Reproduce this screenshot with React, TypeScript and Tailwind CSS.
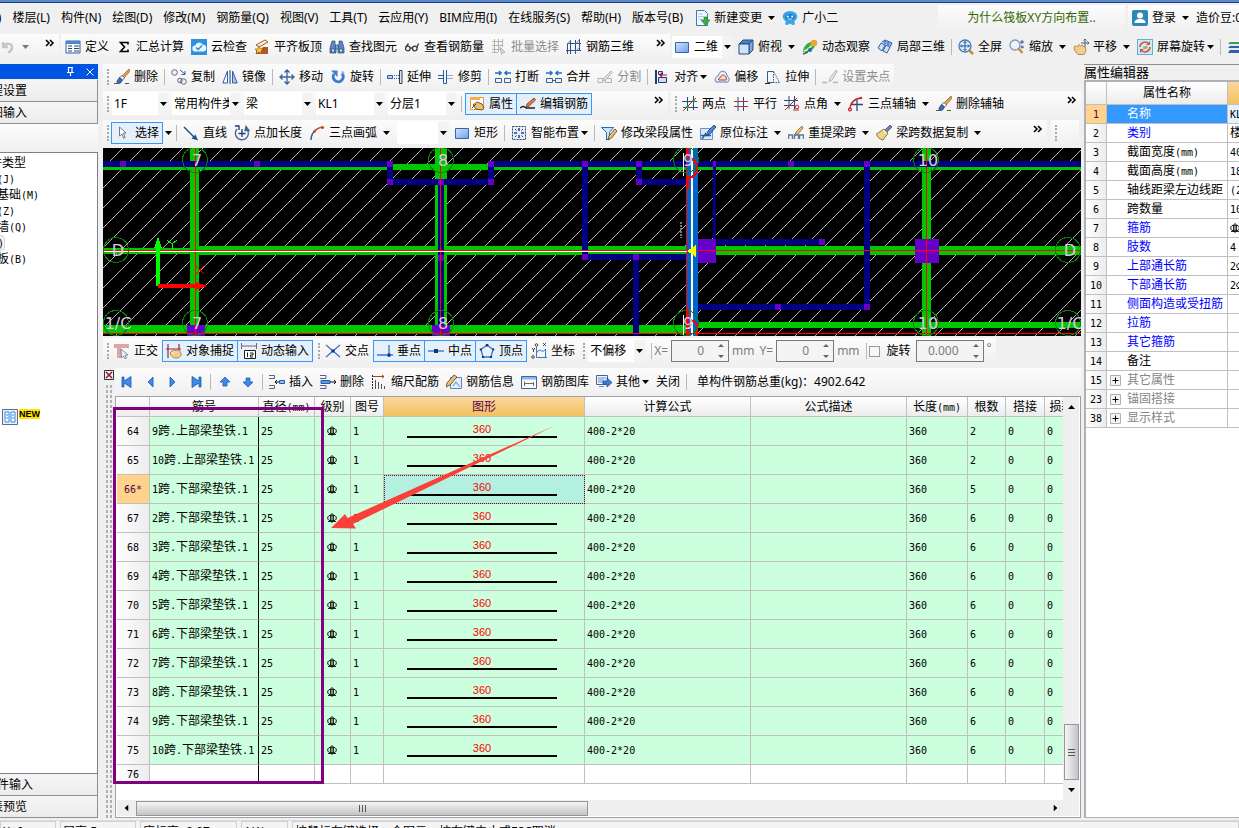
import React from "react";
import clsx from "clsx";

const icons: Record<string, React.ReactNode> = {
  undo: (
    <g fill="none" stroke="#c3c7cc" strokeWidth="2.4">
      <path d="M3 3v5h5M3.500 7.5C6 3.5 12.500 4 12 9c-.3 2-1.500 3.500-4 4.500" />
    </g>
  ),
  define: (
    <g>
      <path d="M1 2h14v12H1z" fill="#fff" stroke="#2f5fa8" />
      <path d="M1 2h14v3H1z" fill="#4f86d0" />
      <path d="M3 7h4M9 7h5M3 9.500h4M9 9.500h5M3 12h4M9 12h5" stroke="#27466f" />
    </g>
  ),
  sigma: <path d="M12 5.500V3.500H4.500L8.500 8l-4 4.500H12v-2" fill="none" stroke="#000" strokeWidth="1.600" />,
  cloud: (
    <g>
      <rect width="16" height="16" fill="#2f8fe0" />
      <path d="M4.500 12.500a3 3 0 0 1-.3-6 4 4 0 0 1 7.500-.8 3.400 3.400 0 0 1 .3 6.800z" fill="#e8f6ff" />
      <path d="M5 8.500l2.200 2L11 6.500" fill="none" stroke="#2a86d4" strokeWidth="1.500" />
    </g>
  ),
  slab: (
    <g>
      <path d="M2 6l9-5 3 2-9 5z" fill="#fff3d6" stroke="#a05a1c" />
      <path d="M2 10h5l2-2h5v7H2z" fill="#b3561f" />
      <path d="M5 7l1.500 3h3L7 12l1 3-3-2-3 2 1-3-2-2h3z" fill="#ffc93b" stroke="#8a4a10" strokeWidth=".6" />
    </g>
  ),
  binoc: (
    <g fill="#5f86c0" stroke="#2c4a80" strokeWidth=".7">
      <path d="M3 2h3v3l1 2v7H1V9z" />
      <path d="M10 2h3l2 7v5H9V7l1-2z" />
      <path d="M6.500 6h3v4h-3z" fill="#7ba0d8" />
      <path d="M2.500 10h3v3h-3zM10.500 10h3v3h-3z" fill="#cfe0f7" />
    </g>
  ),
  glasses: (
    <g fill="none" stroke="#3c3c3c" strokeWidth="1.300">
      <circle cx="3.800" cy="9.500" r="2.300" />
      <circle cx="10.800" cy="9.500" r="2.300" />
      <path d="M6.200 9h2.200M2 8l2.500-3.500M12.800 8.500l1.700-4" />
    </g>
  ),
  batch: (
    <g fill="none" stroke="#b3b3b3">
      <path d="M1 2.500h11M1 6.500h11M1 10.500h8M3.500 0v13M7.500 0v13M11.500 0v8M1 13.500h6" />
      <path d="M9 8l5 5-2 .3-1.500 2z" fill="#ddd" />
    </g>
  ),
  rebar3d: (
    <g fill="none" stroke="#2a4f8f">
      <path d="M1 4.500h14M0 11.500h15M4.500 1v14M9.500 1v14M13.500 0v12M1.500 5v10" />
      <path d="M1.500 5l3-3.500M9.500 5l4-4.500M9.500 12l4-3.500" stroke="#6d8fc4" />
    </g>
  ),
  rect: (
    <g>
      <defs>
        <linearGradient id="rectFill" x1="0" y1="0" x2="1" y2="1">
          <stop offset="0" stopColor="#d3e4fb" />
          <stop offset="1" stopColor="#6f9fe8" />
        </linearGradient>
      </defs>
      <path d="M1.500 3.500h13v10h-13z" fill="url(#rectFill)" stroke="#3466b4" />
    </g>
  ),
  cube: (
    <g stroke="#274a80">
      <path d="M1 5l4-4h10l-4 4z" fill="#4c7ecb" />
      <path d="M11 5l4-4v10l-4 4z" fill="#7fa8e0" />
      <path d="M1 5h10v10H1z" fill="#cfe0f7" />
    </g>
  ),
  orbit: (
    <g>
      <path d="M1 13C1 7 6 2 14 2c0 6-4 11-10 11z" fill="#3aa84a" />
      <path d="M2 12c4-1 7-4 10-9" stroke="#d8f7d0" strokeWidth="1.500" fill="none" />
      <circle cx="12" cy="4" r="3.300" fill="#f0a52b" />
      <path d="M1 15l5-2" stroke="#27702f" strokeWidth="1.500" />
      <circle cx="8" cy="11" r="2" fill="#2a64b8" />
    </g>
  ),
  local3d: (
    <g fill="#cfe0f7" stroke="#2f5fa8">
      <path d="M1 9l3-5 4 2-3 6zM6 12l3-6 4 2-3 6z" />
      <path d="M5 3l3-2 7 3-2 4" fill="#8db4ea" />
      <path d="M8 1.500v4M11 3v4" />
    </g>
  ),
  fullscreen: (
    <g>
      <circle cx="7" cy="7" r="6" fill="#e3effc" stroke="#4a78b8" strokeWidth="1.300" />
      <path d="M7 2.500v9M2.500 7h9M5.500 4L7 2.500 8.500 4M5.500 10L7 11.500 8.500 10M4 5.500L2.500 7 4 8.500M10 5.500L11.500 7 10 8.500" fill="none" stroke="#23529c" />
      <path d="M11.500 11.500l3.500 3.500" stroke="#c98a35" strokeWidth="2.500" />
    </g>
  ),
  zoom: (
    <g>
      <circle cx="6" cy="6" r="5" fill="#eaf3fd" stroke="#8897ad" strokeWidth="1.300" />
      <path d="M9.500 9.500l4 4.500" stroke="#c98a35" strokeWidth="2.300" />
      <path d="M13 1v4M11 3h4M11.500 8h3.500M13 6.500v3" stroke="#33588f" />
    </g>
  ),
  pan: (
    <g>
      <path d="M1 8l2-1.500 1.500 1.500L6 5.500l1.500 1.500L9.500 6l1 1.500 2 1 .5 3.500-2 3.500H5L1.500 11z" fill="#f2cf8d" stroke="#a9762f" strokeWidth=".8" />
      <path d="M12 0v8M8 4h8M10.500 1.500L12 0l1.500 1.500M14.500 2.500L16 4l-1.500 1.500" fill="none" stroke="#4e5e78" />
    </g>
  ),
  screenRotate: (
    <g>
      <rect x=".5" y=".5" width="15" height="15" fill="#cdebf7" stroke="#5ab4d6" />
      <path d="M3 8a5 5 0 0 1 8.500-3.500" fill="none" stroke="#e0503c" strokeWidth="1.600" />
      <path d="M13 8a5 5 0 0 1-8.500 3.500" fill="none" stroke="#e0503c" strokeWidth="1.600" />
      <path d="M13 2v4H9zM3 14v-4h4z" fill="#e0503c" />
      <path d="M6 8l3.500-1.500L11 9l-4 1.500z" fill="#7cc06a" />
    </g>
  ),
  layers: (
    <g>
      <path d="M3 3h12v2H1z" fill="#3f9b4b" />
      <path d="M3 7h12v2H1zM3 11h12v3H1z" fill="#335f9f" />
      <path d="M2 6h13M2 10h13" stroke="#cfe0f7" />
    </g>
  ),
  brush: (
    <g>
      <path d="M15 0L8 7l2 2 6-7z" fill="#e1a34f" stroke="#8b5a1c" strokeWidth=".7" />
      <path d="M8 6.500l2.500 2.500-2 2L5.500 8.500z" fill="#fff" stroke="#446" strokeWidth=".7" />
      <path d="M5.500 8.500l3 2.500-2 3c-2 1-4 0-3.500-2z" fill="#3c6cb8" stroke="#1d3a70" strokeWidth=".7" />
      <path d="M0 14.500h5M11 14.500h4" stroke="#555" />
    </g>
  ),
  copy: (
    <g fill="none" stroke="#5d6b80">
      <circle cx="3.500" cy="3.500" r="2.800" fill="#eef2f8" />
      <circle cx="9" cy="11.500" r="2.300" fill="#dce6f4" />
      <circle cx="12.500" cy="12.500" r="2.800" />
      <path d="M9 1l5 4M14 2v3.500h-3.500" stroke="#2a5ba5" />
    </g>
  ),
  mirror: (
    <g stroke="#2f5fa8" fill="none">
      <path d="M5.500 2v12H.800z" fill="#fff" />
      <path d="M10.500 2v12h4.700z" fill="#a9c8f0" />
      <path d="M8 1v14" stroke="#1e3c70" />
    </g>
  ),
  move: (
    <path d="M8 1v14M1 8h14M5.500 3.500L8 1l2.500 2.500M5.500 12.500L8 15l2.500-2.500M3.500 5.500L1 8l2.500 2.500M12.500 5.500L15 8l-2.500 2.500" fill="none" stroke="#3d6299" strokeWidth="1.300" />
  ),
  rotate: (
    <g>
      <path d="M4 5a5 5 0 1 0 8-.5" fill="none" stroke="#3f7dca" strokeWidth="3" />
      <path d="M1 1.500h6.500V8z" fill="#3f7dca" />
      <path d="M12 2.500l2 2" stroke="#8bb4ea" strokeWidth="2" />
    </g>
  ),
  extend: (
    <g fill="none" stroke="#2a5ba5">
      <path d="M.500 6.500h5v3h-5z" fill="#bcd3f2" />
      <path d="M7 6.500h5M7 9.500h5" strokeDasharray="1 1" />
      <path d="M12.500 1.500h2.500v13h-2.500z" stroke="#333f55" fill="#dde6f2" />
    </g>
  ),
  trim: (
    <g fill="none" stroke="#2a5ba5">
      <path d="M0 6.500h5.500M0 9.500h5.500M5.500 1v13.500h3V1" />
      <path d="M9.500 6.500H15M9.500 9.500H15" strokeDasharray="1 1" />
    </g>
  ),
  breakIt: (
    <g fill="none" stroke="#3a5f97">
      <path d="M.500 9.500h6v4h-6zM9.500 9.500h6v4h-6z" />
      <path d="M0 4h6M16 4h-6M4 2l2 2-2 2M12 2l-2 2 2 2" stroke="#2271c4" strokeWidth="1.600" />
    </g>
  ),
  merge: (
    <g fill="none" stroke="#3a5f97">
      <path d="M.500 9.500h6v4h-6zM9.500 9.500h6v4h-6zM6.500 11.500h3" />
      <path d="M0 4h6M16 4h-6M4 2l2 2-2 2M12 2l-2 2 2 2" stroke="#2271c4" strokeWidth="1.600" />
    </g>
  ),
  split: (
    <g fill="none" stroke="#b1b1b1">
      <path d="M1 9.500h5v4H1zM8.500 9.500h6v4h-6z" />
      <path d="M14 2L7 9l-1 3 3-1.500 6-7z" fill="#e6e6e6" />
    </g>
  ),
  align: (
    <g>
      <path d="M2 1v14" stroke="#1e3c70" strokeWidth="2" />
      <path d="M4.500 8.500h8v5h-8zM4.500 2.500h4v3h-4z" fill="#c9dbf5" stroke="#1e3c70" />
      <path d="M13 6H6M8 4L6 6l2 2" stroke="#c03" fill="none" strokeWidth="1.200" />
    </g>
  ),
  offset: (
    <g fill="none">
      <path d="M2 13c-2-3 0-6 2.500-6.500C5 3 8 1 11 3c2 1 1.800 3 2 4 2 1 3 4 1 6z" stroke="#5c7fb5" fill="#e6eefb" />
      <path d="M4.500 11c0-2 1-2.500 2.500-3 0-2 3-3 4-.5 1.500.5 2 2 1 3.500z" stroke="#c0392b" fill="#fbdcd7" />
    </g>
  ),
  stretch: (
    <g fill="none" stroke="#355a94">
      <path d="M8.500 2.500h-6v11h6" />
      <path d="M8.500 2.500v11M8.500 2.500l6 11h-6" strokeDasharray="1.500 1" />
      <path d="M0 14.500h5" stroke="#222" />
    </g>
  ),
  grip: (
    <g fill="none" stroke="#b5b5b5">
      <path d="M14 1L8 9l-1 4 3-2 5-8z" fill="#e6e6e6" />
      <path d="M0 13.500h5M11 13.500h5" strokeWidth="1.500" />
    </g>
  ),
  props: (
    <g>
      <path d="M1.500 1.500h13v12h-13z" fill="#fff" stroke="#de9a3a" />
      <path d="M1 1h10v3H1z" fill="#f3b04d" />
      <path d="M4 9l4-3 5 2 2 4-2 2-6-1z" fill="#e9bf7a" stroke="#7d5520" />
      <path d="M3 12l4-4" stroke="#444" />
    </g>
  ),
  editRebar: (
    <g>
      <path d="M14 2L7 8l-1 3 3-.8L15.500 4z" fill="#e07d4b" stroke="#6b3a1c" strokeWidth=".8" />
      <path d="M0 12c3-2 4-2 6 0h9" stroke="#222" strokeWidth="1.300" fill="none" />
    </g>
  ),
  twoPoint: (
    <g fill="none" stroke="#2b4b80">
      <path d="M5.500 1v14M11.500 0v14M0 5.500h15M1 11.500h15" />
      <path d="M1 15L14 2" stroke="#c22" />
      <circle cx="5.500" cy="11" r="1.400" fill="#2a2" stroke="none" />
      <circle cx="11.500" cy="5" r="1.400" fill="#2a2" stroke="none" />
    </g>
  ),
  parallel: (
    <g fill="none" stroke="#2b4b80">
      <path d="M5 1v14M10.500 1v14" />
      <path d="M1 5.500h14M1 10.500h14" stroke="#a33" />
    </g>
  ),
  pointAngle: (
    <g fill="none" stroke="#2b4b80">
      <path d="M5 0v13M10.500 0v13M0 4.500h14M0 9.500h10" />
      <path d="M1 14L13 2M9 14h6" stroke="#c22" />
      <circle cx="13" cy="11" r="1.800" stroke="#c22" />
    </g>
  ),
  threeAxis: (
    <g fill="none" stroke="#2b4b80" strokeWidth="1.300">
      <path d="M9 4v11M3 8.500h12" />
      <path d="M2 14c0-7 3-11 11-12" stroke="#c22" />
      <circle cx="2" cy="13.500" r="1.400" fill="#fff" stroke="#c22" />
      <circle cx="13" cy="2" r="1.200" fill="#c22" stroke="none" />
    </g>
  ),
  pointer: <path d="M4.500 2l6.500 6H8.500l1.500 4.500-1.500.7L7 9l-2.500 2z" fill="#fff" stroke="#6b7a92" />,
  line: (
    <g>
      <path d="M1 2l11 11" stroke="#244f95" strokeWidth="1.500" />
      <path d="M15 15.500l-6.500-2 4-4z" fill="#244f95" />
    </g>
  ),
  pointLen: (
    <g fill="none" stroke="#44638f" strokeWidth="1.300">
      <path d="M3 4a6.500 6.500 0 1 0 10.500 1" />
      <path d="M1 1h4v4M8 4v8M4.500 8.500h7" stroke="#1d3a70" />
      <path d="M12 1.500l3 4h-4z" fill="#44638f" />
    </g>
  ),
  arc: (
    <g fill="none">
      <path d="M2 15c0-5 2-8 5-10" stroke="#2a5ba5" strokeWidth="1.500" />
      <path d="M5 7C7 4 10 2.500 14 2" stroke="#c54b28" strokeWidth="1.500" />
      <circle cx="13.500" cy="2.500" r="1.600" fill="#c54b28" />
      <circle cx="5.500" cy="6.500" r="1.300" fill="#c54b28" />
    </g>
  ),
  smart: (
    <g fill="none" stroke="#26436f">
      <path d="M1.500 1.500h13v13h-13z" strokeDasharray="2 1" fill="#e6eefb" />
      <path d="M8 3v3M8 10v3M3 8h3M10 8h3" strokeWidth="1.500" />
      <path d="M4 4l1.500 1.500M12 4l-1.500 1.500M4 12l1.500-1.500M12 12l-1.500-1.500" />
    </g>
  ),
  beamProps: (
    <g>
      <path d="M.500 2.500h12l-4 5v6l-3 1.500V7.500z" fill="#cfe3fa" stroke="#2b68b5" />
      <path d="M14 4L8 11l-1 4 3.500-2L16 6z" fill="#ecc27b" stroke="#4b3b1e" strokeWidth=".8" />
    </g>
  ),
  inSitu: (
    <g>
      <path d="M.500 3.500h12v11H.500z" fill="#dce8f8" stroke="#6c8fc4" />
      <path d="M2 14l4-6M1 10.500h10" stroke="#2b5ca5" strokeWidth="1.400" />
      <path d="M14 0L8 6 6 11l4-2 6-7z" fill="#4b86d4" stroke="#1d3a70" strokeWidth=".8" />
    </g>
  ),
  respan: (
    <g>
      <path d="M.500 14v-4h4v4M6.500 14v-4h4v4M11.500 14v-4h4v4" fill="none" stroke="#5a789f" strokeWidth="1.400" />
      <path d="M14 1L8 7l-1 3 3-1 5-6z" fill="#e9bf7a" stroke="#84602a" strokeWidth=".8" />
    </g>
  ),
  spanCopy: (
    <g>
      <path d="M14 0l2 2-5 5-2-2z" fill="#6a86b5" stroke="#2c4470" strokeWidth=".7" />
      <path d="M8 4l4 4-5 7c-3-.5-6-3-6.500-6z" fill="#ecd68f" stroke="#92752e" />
      <path d="M7 5l4 4" stroke="#fff" />
    </g>
  ),
  ortho: (
    <g>
      <path d="M0 1h15v4H7v10H3V5H0z" fill="#dca6a6" />
      <path d="M7 6l7 6-3 .3L12.500 15l-1.500.700L9.500 13 7.500 15z" fill="#eef3f8" stroke="#5b7390" strokeWidth=".8" />
    </g>
  ),
  snap: (
    <g>
      <path d="M2 1v14M13 1v6M0 6h15" stroke="#8c2c4c" strokeWidth="1.200" />
      <path d="M4.500 9l3-2 3 .5 3-.5 2 5-3 3H8l-3.500-3z" fill="#efcf90" stroke="#a9762f" strokeWidth=".8" />
      <path d="M6 9l2 2" stroke="#fff" />
    </g>
  ),
  dynInput: (
    <g>
      <path d="M.500 0v6M15.500 0v6M.500 3h15" stroke="#8c5a6c" fill="none" />
      <path d="M3.500 7.500h11v8h-11z" fill="#fff" stroke="#1c1c1c" />
      <path d="M6.500 9.500v4.500M9 10h3v2H9.500v2H12" stroke="#1c1c1c" fill="none" />
    </g>
  ),
  cross: (
    <g stroke="#3c76c8" strokeWidth="1.300">
      <path d="M1 2l14 12M15 2L1 14" />
      <path d="M6.500 6.500h3v3h-3z" fill="#12347a" stroke="none" />
    </g>
  ),
  perp: (
    <g stroke="#3c76c8" strokeWidth="1.400">
      <path d="M0 12h16M12 2v12" />
      <path d="M10.500 10.500h3v3h-3z" fill="#12347a" stroke="none" />
    </g>
  ),
  mid: (
    <g stroke="#3c76c8" strokeWidth="1.400">
      <path d="M0 8h16" />
      <path d="M6 6h4v4H6z" fill="#12347a" stroke="none" />
    </g>
  ),
  vertex: (
    <g>
      <path d="M8 2l6 4.500-2 7.500H4L2 6.500z" fill="#eaf3fd" stroke="#3c76c8" strokeWidth="1.300" />
      <path d="M6.800 1h2.500v2.500H6.800zM.800 5.500h2v2h-2zM13.200 5.500h2v2h-2zM3 13h2v2H3zM11 13h2v2h-2z" fill="#12347a" />
    </g>
  ),
  coord: (
    <g fill="none" stroke="#3c76c8">
      <path d="M5.500 4v10.500H16M5.500 10c4-7 5 2 9-4v8" />
      <path d="M1 5l1.500 2L4 5M2.500 7v2M12 0l3 3M15 0l-3 3" stroke="#222" strokeWidth=".8" />
      <circle cx="5.500" cy="2" r="1.300" stroke="#222" strokeWidth=".8" />
      <circle cx="2" cy="14" r="1.300" stroke="#222" strokeWidth=".8" />
    </g>
  ),
  first: <path d="M3 3h2v4l7-4.500v11L5 9v4H3z" fill="#3f8ae6" stroke="#1b58b0" strokeWidth=".8" />,
  prev: <path d="M11 3v10L6 8z" fill="#3f8ae6" stroke="#1b58b0" strokeWidth=".8" />,
  next: <path d="M5 3v10l5-5z" fill="#3f8ae6" stroke="#1b58b0" strokeWidth=".8" />,
  last: <path d="M13 3h-2v4L4 2.500v11L11 9v4h2z" fill="#3f8ae6" stroke="#1b58b0" strokeWidth=".8" />,
  up: <path d="M8 3l5 5h-3v4H6V8H3z" fill="#3f8ae6" stroke="#1b58b0" strokeWidth=".8" />,
  down: <path d="M8 13l5-5h-3V4H6v4H3z" fill="#3f8ae6" stroke="#1b58b0" strokeWidth=".8" />,
  insertRow: (
    <g fill="none" stroke="#50678a">
      <path d="M0 1.500h5.500v3H0M0 11.500h5.500v3H0" />
      <path d="M6 8h5M8 6L6 8l2 2" stroke="#111" />
      <path d="M10.500 6.500h5v3h-5z" fill="#8fb8ee" stroke="#2b5ca5" />
    </g>
  ),
  deleteRow: (
    <g fill="none" stroke="#50678a">
      <path d="M0 1.500h6v3H0M0 11.500h6v3H0" />
      <path d="M1 6.500h9v3H1z" fill="#5d9be8" stroke="#2b5ca5" />
      <path d="M10 8h6M14 6l2 2-2 2" stroke="#111" />
    </g>
  ),
  scaleBar: (
    <g fill="none" stroke="#555">
      <path d="M1.500 1v14" strokeDasharray="2 1" stroke="#222" />
      <path d="M2 2.500h11M11 1l2 1.500L11 4" stroke="#a5442a" />
      <path d="M4.500 6v9M7.500 8v7M10.500 10v5M13.500 12v3" />
    </g>
  ),
  rebarInfo: (
    <g>
      <path d="M4.500 3.500h11v11h-11z" fill="#e3effc" stroke="#5d84bd" />
      <path d="M7 12l3-4 4 5" fill="none" stroke="#5d84bd" />
      <path d="M8 1l3 2-7 8-4 2 1-4z" fill="#ecc27b" stroke="#4b3b1e" strokeWidth=".8" />
    </g>
  ),
  rebarLib: (
    <g>
      <path d="M.500 2.500h15v12H.500z" fill="#f6fafe" stroke="#41649a" />
      <path d="M1 3h14v2.500H1z" fill="#8db4ea" />
      <path d="M3.500 12V7.500M3.500 9.500h9M12.500 8v4" fill="none" stroke="#7a6a48" />
    </g>
  ),
  other: (
    <g>
      <path d="M.500 1.500h11v9H.500z" fill="#eef4fc" stroke="#41649a" />
      <path d="M2 4h8M2 6h6M2 8h5M3 12.500h5" stroke="#6d8fc4" />
      <path d="M7 7h4V4l5 4.500L11 13v-3H7z" fill="#3b7fdc" stroke="#1b4f9c" strokeWidth=".8" />
    </g>
  ),
  newChange: (
    <g>
      <path d="M2.500.500h8l3 3v12h-11z" fill="#f4faff" stroke="#3c78bc" />
      <path d="M4 4h5M4 6.500h6M4 9h4" stroke="#a8c9ec" />
      <path d="M10 7h3v3h3l-4.500 5.500L7 10h3z" fill="#3fae3f" stroke="#1f7a24" strokeWidth=".6" />
    </g>
  ),
  mascot: (
    <g>
      <ellipse cx="8" cy="6.500" rx="7.300" ry="5.500" fill="#3aa6ea" />
      <path d="M4 10h8l1 4.500-2.500.5L8 13.500 5.500 15 3 14.500z" fill="#3aa6ea" />
      <ellipse cx="8" cy="7" rx="5" ry="3.300" fill="#1b7fc8" />
      <circle cx="5.800" cy="6.500" r="1" fill="#fff" />
      <circle cx="10.200" cy="6.500" r="1" fill="#fff" />
      <path d="M5.800 8.500c1.500 1 3 1 4.400 0" stroke="#fff" fill="none" strokeWidth=".9" />
    </g>
  ),
  user: (
    <g>
      <rect width="16" height="16" rx="2" fill="#2f86b8" />
      <circle cx="8" cy="5.500" r="3" fill="#fff" />
      <path d="M2.500 13c0-3 2-4 5.500-4s5.500 1 5.500 4z" fill="#fff" />
    </g>
  ),
};

const Icon = ({ name }: { name: string }) => (
  <svg className="h-4 w-4 shrink-0" viewBox="0 0 16 16" aria-hidden="true">
    {icons[name]}
  </svg>
);

const Arrow = ({ className }: { className?: string }) => (
  <svg className={clsx("h-1 w-[7px] shrink-0", className)} viewBox="0 0 7 4" aria-hidden="true">
    <path d="M0 0h7L3.500 4z" fill="#000" />
  </svg>
);

interface ToolProps {
  label?: string;
  icon?: string;
  active?: boolean;
  disabled?: boolean;
  menu?: "tight" | "split";
  title?: string;
}

const Tool = ({ label, icon, active, disabled, menu, title }: ToolProps) => (
  <button
    type="button"
    disabled={disabled}
    aria-label={title}
    className={clsx(
      "flex h-[22px] shrink-0 items-center gap-1 whitespace-nowrap",
      active && "border border-[#3399ff] bg-[#e5f0fa] px-[3px]",
      disabled && "text-[#8d8d8d]"
    )}
  >
    {icon && <Icon name={icon} />}
    {label}
    {menu === "split" && <Arrow className="ml-0.5" />}
    {menu === "tight" && <Arrow className="-ml-0.5" />}
  </button>
);

const Sep = () => <span className="-mx-px h-4 w-px shrink-0 bg-[#b9b9b9]" />;
const Grip = () => (
  <span className="-mr-0.5 h-4 shrink-0 border-l-2 border-dotted border-[#a9a9a9]" />
);
const Chevrons = () => (
  <button type="button" aria-label="更多" className="mb-2 h-3 shrink-0">
    <svg className="h-2 w-2.5" viewBox="0 0 10 8">
      <path d="M1 1l3 3-3 3M5 1l3 3-3 3" fill="none" stroke="#000" strokeWidth="1.600" />
    </svg>
  </button>
);
const Joined = ({ children }: { children: React.ReactNode }) => (
  <div className="-mx-[3px] flex -space-x-px">{children}</div>
);

const Panel = ({ className, children }: { className?: string; children?: React.ReactNode }) => (
  <div
    className={clsx(
      "flex min-h-[26px] shrink-0 items-center gap-[7px] bg-gradient-to-b from-[#fcfcfc] to-[#f0f0f0] px-1",
      className
    )}
  >
    {children}
  </div>
);

const Combo = ({ value, name, className }: { value: string; name: string; className: string }) => (
  <div className={clsx("relative h-[22px] shrink-0 bg-white", className)}>
    <select aria-label={name} className="h-full w-full appearance-none bg-white pl-0.5 pr-3">
      <option>{value}</option>
    </select>
    <span className="pointer-events-none absolute inset-y-0 right-0 flex w-[11px] items-center justify-center bg-[#f3f3f3]">
      <Arrow />
    </span>
  </div>
);

const Spin = ({ id, value, className }: { id: string; value: string; className: string }) => (
  <div className={clsx("flex h-[22px] items-center border border-[#7a7a7a] bg-[#f4f4f4]", className)}>
    <input id={id} defaultValue={value} className="w-0 flex-1 bg-transparent pr-3.5 text-right text-[#7d7d7d]" />
    <svg className="mr-1 h-[18px] w-1.5" viewBox="0 0 6 18">
      <path d="M0 5h6L3 2zM0 13h6l-3 3z" fill="#666" />
    </svg>
  </div>
);

// Half-width Latin at 10px mono keeps the 6px / 12px column grid next to full-width Han
const Grid12 = ({ text }: { text: string }) => (
  <span className="font-['DejaVu_Sans_Mono','Noto_Sans_CJK_SC',monospace] text-[10px]">
    {text.split(/([\u4e00-\u9fff]+)/).map((part, i) =>
      i % 2 ? (
        <span key={i} className="text-xs leading-none">
          {part}
        </span>
      ) : (
        part
      )
    )}
  </span>
);

const RebarMark = () => (
  <svg className="inline h-[11px] w-[10px]" viewBox="0 0 10 11" aria-label="三级钢">
    <path d="M5 0v10M3.500 1.500v7M6.500 1.500v7M1 8.500h8" fill="none" stroke="#111" strokeWidth=".9" />
    <ellipse cx="5" cy="5" rx="4.300" ry="2.800" fill="none" stroke="#111" />
  </svg>
);

const menus = [
  "楼层(L)", "构件(N)", "绘图(D)", "修改(M)", "钢筋量(Q)", "视图(V)", "工具(T)",
  "云应用(Y)", "BIM应用(I)", "在线服务(S)", "帮助(H)", "版本号(B)",
];

const MenuBar = () => (
  <nav className="flex h-[29px] shrink-0 items-center justify-between overflow-hidden">
    <div className="flex shrink-0 items-center gap-[11px] whitespace-nowrap">
      <button type="button" className="-ml-9">文件(F)</button>
      {menus.map((m) => (
        <button type="button" key={m}>{m}</button>
      ))}
      <div className="flex gap-[7px]">
        <Tool icon="newChange" label="新建变更" menu="split" />
        <Tool icon="mascot" label="广小二" />
      </div>
    </div>
    <div className="flex gap-[3px]">
      <Panel className="w-[187px] justify-center">
        <a href="#" className="text-[#336600]">为什么筏板XY方向布置..</a>
      </Panel>
      <Panel className="w-[111px]">
        <Tool icon="user" label="登录" menu="split" />
        <button type="button" className="whitespace-nowrap">造价豆:0</button>
      </Panel>
    </div>
  </nav>
);

const MainToolbar = () => (
  <div className="flex h-[30px] shrink-0 items-center gap-0.5 overflow-hidden">
    <Panel className="w-[59px] justify-between pl-0">
      <div className="flex items-center gap-1.5">
        <Icon name="undo" />
        <Arrow className="opacity-50" />
      </div>
      <Chevrons />
    </Panel>
    <Panel className="w-[609px]">
      <Tool icon="define" label="定义" />
      <Tool icon="sigma" label="汇总计算" />
      <Tool icon="cloud" label="云检查" />
      <Tool icon="slab" label="平齐板顶" />
      <Tool icon="binoc" label="查找图元" />
      <Tool icon="glasses" label="查看钢筋量" />
      <Tool icon="batch" label="批量选择" disabled />
      <Tool icon="rebar3d" label="钢筋三维" />
      <span className="flex-1" />
      <Chevrons />
    </Panel>
    <div className="flex shrink-0 items-center gap-[5px]">
      <div className="flex items-center bg-white pl-0.5">
        <Icon name="rect" />
        <Combo name="视图模式" value="二维" className="w-[43px] pl-0.5" />
      </div>
      <div className="flex items-center gap-[7px]">
        <Tool icon="cube" label="俯视" menu="split" />
        <Tool icon="orbit" label="动态观察" />
        <Tool icon="local3d" label="局部三维" />
        <Sep />
        <Tool icon="fullscreen" label="全屏" />
        <Tool icon="zoom" label="缩放" menu="split" />
        <Tool icon="pan" label="平移" menu="split" />
        <Tool icon="screenRotate" label="屏幕旋转" menu="tight" />
        <Sep />
        <Tool icon="layers" title="图层" />
      </div>
    </div>
  </div>
);

const treeItems = ["轴网(J)", "筏板基础(M)", "框柱(Z)", "剪力墙(Q)", "梁(L)", "现浇板(B)"];
const sideButton =
  "flex h-[22px] w-full shrink-0 items-center border-b border-r border-[#8f8f8f] bg-gradient-to-b from-[#f6f6f6] to-[#ececec]";

const LeftPanel = () => (
  <aside className="flex w-[98px] shrink-0 flex-col overflow-hidden pt-0.5">
    <div className="flex h-[15px] shrink-0 items-center justify-end gap-3 bg-[#0054e3] pr-1">
      <button type="button" aria-label="固定">
        <svg className="h-[9px] w-[7px]" viewBox="0 0 7 9">
          <path d="M1.500 0v5M5 0v5M1 .500h5M0 5.500h7M3.500 5.500V9" fill="none" stroke="#fff" strokeWidth="1.200" />
        </svg>
      </button>
      <button type="button" aria-label="关闭">
        <svg className="h-2 w-2" viewBox="0 0 8 8">
          <path d="M.500.500l7 7M7.500.500l-7 7" stroke="#fff" />
        </svg>
      </button>
    </div>
    <div className="h-px shrink-0" />
    <button type="button" className={sideButton}>
      <span className="-ml-[21px]">工程设置</span>
    </button>
    <button type="button" className={sideButton}>
      <span className="-ml-[21px]">绘图输入</span>
    </button>
    <div className="h-7 shrink-0 bg-gradient-to-b from-[#fcfcfc] to-[#f0f0f0]" />
    <div className="min-h-0 flex-1 border-r border-b border-t border-[#7f7f8c] bg-white pt-0.5">
      <div className="-ml-[46px] h-4 leading-4">
        <Grid12 text="常用构件类型" />
      </div>
      <ul className="-ml-[27px]">
        {treeItems.map((t) => (
          <li key={t} className="h-4 leading-4">
            <button
              type="button"
              className={clsx(
                "block h-4 whitespace-nowrap leading-4",
                t === "梁(L)" && "rounded-sm border border-[#d6d6d6] bg-[#f4f4f4] leading-[14px]"
              )}
            >
              <Grid12 text={t} />
            </button>
          </li>
        ))}
      </ul>
      <div className="mt-[142px] flex gap-px pl-0.5">
        <svg className="h-4 w-4" viewBox="0 0 16 16">
          <path d="M.500.500h15v15H.500z" fill="#e9f1fa" stroke="#5f6f80" />
          <path d="M3 3h4v10H3zM9 3h4v10H9z" fill="#fff" stroke="#2f8fe0" />
          <path d="M4 6h2M4 9h2M10 6h2M10 9h2" stroke="#2f8fe0" />
        </svg>
        <span className="h-2.5 bg-[#ffe100] font-['Liberation_Sans',sans-serif] text-[9px] font-bold leading-[10px]">
          NEW
        </span>
      </div>
    </div>
    <button type="button" className={sideButton}>
      <span className="-ml-[15px]">构件输入</span>
    </button>
    <button type="button" className={sideButton}>
      <span className="-ml-[21px]">报表预览</span>
    </button>
    <div className="h-0.5 shrink-0" />
  </aside>
);

const DrawToolbars = () => (
  <div className="shrink-0">
    <div className="flex h-[29px] items-center">
      <Panel>
        <Grip />
        <Tool icon="brush" label="删除" />
        <Sep />
        <Tool icon="copy" label="复制" />
        <Tool icon="mirror" label="镜像" />
        <Sep />
        <Tool icon="move" label="移动" />
        <Tool icon="rotate" label="旋转" />
        <Sep />
        <Tool icon="extend" label="延伸" />
        <Tool icon="trim" label="修剪" />
        <Sep />
        <Tool icon="breakIt" label="打断" />
        <Tool icon="merge" label="合并" />
        <Tool icon="split" label="分割" disabled />
        <Sep />
        <Tool icon="align" label="对齐" menu="tight" />
        <Tool icon="offset" label="偏移" />
        <Tool icon="stretch" label="拉伸" />
        <Sep />
        <Tool icon="grip" label="设置夹点" disabled />
      </Panel>
    </div>
    <div className="flex h-[26px] items-center gap-[3px]">
      <Panel className="w-[565px]">
        <Grip />
        <div className="-ml-0.5 -mr-0.5 flex gap-[3px]">
          <Combo name="楼层" value="1F" className="w-[57px]" />
          <Combo name="构件类型" value="常用构件类型" className="w-[69px]" />
          <Combo name="构件" value="梁" className="w-[69px]" />
          <Combo name="构件名称" value="KL1" className="w-[69px]" />
          <Combo name="分层" value="分层1" className="w-[69px]" />
        </div>
        <Sep />
        <Joined>
          <Tool icon="props" label="属性" active />
          <Tool icon="editRebar" label="编辑钢筋" active />
        </Joined>
        <span className="flex-1" />
        <Chevrons />
      </Panel>
      <Panel className="flex-1">
        <Grip />
        <Tool icon="twoPoint" label="两点" />
        <Tool icon="parallel" label="平行" />
        <Tool icon="pointAngle" label="点角" menu="split" />
        <Tool icon="threeAxis" label="三点辅轴" menu="split" />
        <Tool icon="brush" label="删除辅轴" />
        <span className="flex-1" />
        <Chevrons />
      </Panel>
    </div>
    <div className="flex h-[31px] items-center gap-1">
      <Panel className="w-[944px]">
        <Grip />
        <div className="-ml-[3px] -mr-0.5 flex items-center gap-0.5">
          <Tool icon="pointer" label="选择" active />
          <Arrow />
        </div>
        <Sep />
        <Tool icon="line" label="直线" />
        <Tool icon="pointLen" label="点加长度" />
        <Tool icon="arc" label="三点画弧" menu="split" />
        <Combo name="画弧方式" value="" className="-mr-0.5 w-[52px]" />
        <Tool icon="rect" label="矩形" />
        <Sep />
        <Tool icon="smart" label="智能布置" menu="tight" />
        <Sep />
        <Tool icon="beamProps" label="修改梁段属性" />
        <Tool icon="inSitu" label="原位标注" menu="split" />
        <Tool icon="respan" label="重提梁跨" menu="split" />
        <Tool icon="spanCopy" label="梁跨数据复制" menu="split" />
        <span className="flex-1" />
        <Chevrons />
      </Panel>
      <Panel className="w-7">
        <Grip />
      </Panel>
    </div>
  </div>
);

type Box = [number, number, number, number];

const greenBoxes: Box[] = [
  [0, 19, 978, 3], [290, 16, 95, 6], [87, 0, 9, 188], [0, 100, 87, 6], [96, 98, 488, 9],
  [595, 98, 383, 9], [332, 0, 12, 188], [0, 177, 584, 8], [595, 174, 383, 6], [819, 0, 9, 188],
];
const navyBoxes: Box[] = [
  [0, 13, 290, 6], [385, 13, 593, 6], [284, 13, 6, 24], [284, 31, 107, 6], [385, 13, 6, 24],
  [335, 37, 6, 140], [479, 13, 6, 99], [485, 106, 99, 6], [530, 112, 6, 76], [533, 13, 6, 24],
  [539, 31, 45, 6], [610, 13, 3, 78], [613, 91, 109, 6], [595, 156, 172, 6], [761, 13, 6, 149],
];
const purpleBoxes: Box[] = [
  [17, 13, 6, 6], [151, 13, 6, 6], [284, 13, 6, 6], [284, 31, 6, 6], [385, 13, 6, 6],
  [385, 31, 6, 6], [335, 31, 6, 6], [335, 107, 6, 6], [84, 177, 18, 11], [329, 177, 18, 11],
  [479, 13, 6, 6], [479, 106, 6, 6], [530, 106, 6, 6], [533, 13, 6, 6], [533, 31, 6, 6],
  [610, 13, 3, 6], [685, 13, 6, 6], [595, 91, 18, 24], [716, 91, 6, 6], [672, 156, 6, 6],
  [761, 13, 6, 6], [761, 156, 6, 6], [812, 91, 24, 24],
];
const axisMarks: [number, number, string][] = [
  [92, 12, "7"], [338, 12, "8"], [583, 12, "9"], [823, 12, "10"],
  [92, 175, "7"], [338, 175, "8"], [583, 175, "9"], [823, 175, "10"],
  [13, 102, "D"], [965, 102, "D"], [13, 175, "1/C"], [965, 175, "1/C"],
];

const Boxes = ({ list, fill }: { list: Box[]; fill: string }) => (
  <g fill={fill}>
    {list.map(([x, y, w, h], i) => (
      <rect key={i} x={x} y={y} width={w} height={h} />
    ))}
  </g>
);

const DrawingCanvas = () => (
  <svg className="h-[188px] w-full shrink-0 bg-black" shapeRendering="crispEdges">
    <defs>
      <pattern id="hatch" width="20" height="20" patternUnits="userSpaceOnUse">
        <path d="M0 20L20 0" stroke="#b0b0b0" strokeWidth="1" />
      </pattern>
    </defs>
    <rect width="100%" height="100%" fill="url(#hatch)" />
    <Boxes list={greenBoxes} fill="#00c800" />
    <Boxes list={navyBoxes} fill="#000080" />
    <Boxes list={purpleBoxes} fill="#6400c8" />
    <rect x="584" width="11" height="188" fill="#0064c8" />
    <rect x="588" width="2" height="188" fill="#fff" />
    <g fill="#f00">
      <rect y="102" width="100%" height="1" />
      <rect y="185" width="100%" height="1" />
      <rect x="92" width="1" height="188" />
      <rect x="337" width="1" height="188" />
      <rect x="583" width="1" height="188" />
      <rect x="823" width="1" height="188" />
    </g>
    <rect y="103" width="584" height="1" fill="#fff" />
    <path d="M584 0v8M584 28v13M584 160v28" stroke="#f00" strokeWidth="3" />
    <path d="M585 10c12 0 12 20 0 20M587 172c8 1 8 8 7 16" fill="none" stroke="#f00" strokeWidth="2" />
    <path d="M580.500 5v23M580.500 167v20" stroke="#fff" />
    <path d="M577.500 74v16" stroke="#777" strokeDasharray="2 1" strokeWidth="2" />
    <path d="M584 103l9-6v12z" fill="#ff0" />
    <path d="M55 98v40" stroke="#0f0" strokeWidth="4" />
    <path d="M55 89l4 11h-8z" fill="#0f0" />
    <path d="M55 138h38" stroke="#f00" strokeWidth="4" />
    <path d="M104 138l-12-4v8z" fill="#f00" />
    <path d="M64 92l5 4 5-4M69 96v5" fill="none" stroke="#0f0" />
    <path d="M93 118l8 8M101 118l-8 8" stroke="#f00" />
    {axisMarks.map(([x, y, label], i) => (
      <g key={i}>
        <circle cx={x} cy={y} r="12.500" fill="none" stroke="#0a7d0a" />
        <text
          x={x + 2}
          y={y + 6}
          textAnchor="middle"
          fill="#dcc8e4"
          className="font-['DejaVu_Sans',sans-serif] text-base"
        >
          {label}
        </text>
      </g>
    ))}
  </svg>
);

const SnapBar = () => (
  <div className="flex h-[30px] shrink-0 items-center">
    <Panel>
      <Grip />
      <Tool icon="ortho" label="正交" />
      <Joined>
        <Tool icon="snap" label="对象捕捉" active />
        <Tool icon="dynInput" label="动态输入" active />
      </Joined>
    </Panel>
    <Panel>
      <Grip />
      <Tool icon="cross" label="交点" />
      <Joined>
        <Tool icon="perp" label="垂点" active />
        <Tool icon="mid" label="中点" active />
        <Tool icon="vertex" label="顶点" active />
      </Joined>
      <Tool icon="coord" label="坐标" />
    </Panel>
    <Panel>
      <Grip />
      <div className="-ml-0.5">
        <Combo name="偏移方式" value="不偏移" className="w-[57px]" />
      </div>
      <Sep />
      <div className="-ml-1 flex items-center gap-[3px] text-[#7d7d7d]">
        <label htmlFor="offX">X=</label>
        <Spin id="offX" value="0" className="w-[58px]" />
        mm
        <label htmlFor="offY" className="ml-0.5">Y=</label>
        <Spin id="offY" value="0" className="w-[58px]" />
        mm
      </div>
      <Sep />
      <input
        id="rot"
        type="checkbox"
        className="-ml-1 h-[11px] w-[11px] appearance-none border border-[#9a9a9a] bg-[#f7f7f7]"
      />
      <label htmlFor="rot">旋转</label>
      <div className="-ml-0.5 flex gap-[3px] text-[#7d7d7d]">
        <label htmlFor="rotDeg" className="sr-only">旋转角度</label>
        <Spin id="rotDeg" value="0.000" className="w-[68px]" />
        °
      </div>
    </Panel>
  </div>
);

const columns = [
  "", "筋号", "直径(mm)", "级别", "图号", "图形", "计算公式", "公式描述", "长度(mm)", "根数", "搭接", "损耗(%)",
];
const rows = [
  { no: "64", name: "9跨.上部梁垫铁.1", count: 2 },
  { no: "65", name: "10跨.上部梁垫铁.1", count: 2 },
  { no: "66*", name: "1跨.下部梁垫铁.1", count: 5 },
  ...Array.from({ length: 9 }, (_, i) => ({
    no: String(67 + i),
    name: `${i + 2}跨.下部梁垫铁.1`,
    count: 6,
  })),
];

const headFill = "bg-gradient-to-b from-white to-[#ececec]";
const orangeFill = "bg-gradient-to-b from-[#fbd79c] to-[#f2c15e]";
const rowHead = "bg-gradient-to-r from-white to-[#ececec] text-center";

const RebarTable = () => (
  <table className="w-[980px] table-fixed border-separate border-spacing-0 whitespace-nowrap [&_td]:overflow-hidden [&_td]:border-b [&_td]:border-r [&_td]:border-[#c0c0c0] [&_td]:p-0 [&_td]:pl-0.5 [&_th]:overflow-hidden [&_th]:border-b [&_th]:border-r [&_th]:border-[#c0c0c0] [&_th]:p-0 [&_th]:font-normal">
    <colgroup>
      <col className="w-[33px]" />
      <col className="w-[109px]" />
      <col className="w-[56px]" />
      <col className="w-[36px]" />
      <col className="w-[33px]" />
      <col className="w-[201px]" />
      <col className="w-[166px]" />
      <col className="w-[156px]" />
      <col className="w-[61px]" />
      <col className="w-[38px]" />
      <col className="w-[39px]" />
      <col className="w-[52px]" />
    </colgroup>
    <thead>
      <tr className="h-5">
        {columns.map((c, i) => (
          <th key={i} className={i === 5 ? clsx(orangeFill, "text-[#5c0050]") : headFill}>
            <Grid12 text={c} />
          </th>
        ))}
      </tr>
    </thead>
    <tbody>
      {rows.map((r) => {
        const current = r.no === "66*";
        return (
          <tr key={r.no} className="h-[29px] bg-[#ccffdd]">
            <th className={current ? "bg-[#ffd38c] text-[#5c0050]" : rowHead}>
              <Grid12 text={r.no} />
            </th>
            <td className="!border-r-black"><Grid12 text={r.name} /></td>
            <td><Grid12 text="25" /></td>
            <td className="!pl-3"><RebarMark /></td>
            <td><Grid12 text="1" /></td>
            <td
              className={clsx(
                "!pr-1 !pl-0",
                current && "bg-[#b4f0e0] outline-1 -outline-offset-1 outline-dotted outline-[#700040]"
              )}
            >
              <div className="mx-auto mb-0.5 w-[150px] border-b-2 border-black text-center font-['Liberation_Sans',sans-serif] text-[11px] leading-[13px] text-[#f00]">
                360
              </div>
            </td>
            <td><Grid12 text="400-2*20" /></td>
            <td />
            <td><Grid12 text="360" /></td>
            <td><Grid12 text={String(r.count)} /></td>
            <td><Grid12 text="0" /></td>
            <td><Grid12 text="0" /></td>
          </tr>
        );
      })}
      <tr className="h-[19px]">
        <th className={rowHead}><Grid12 text="76" /></th>
        {columns.slice(1).map((c, i) => (
          <td key={c} className={clsx(i === 0 && "!border-r-black")} />
        ))}
      </tr>
    </tbody>
  </table>
);

const RebarEditor = () => (
  <section className="flex min-h-0 flex-1 pb-0.5">
    <div className="flex w-3 shrink-0 flex-col gap-1 pt-0.5">
      <button type="button" aria-label="关闭面板">
        <svg className="ml-px h-2.5 w-2.5" viewBox="0 0 10 10">
          <path d="M.500.500h9v9h-9z" fill="#eee" stroke="#333" />
          <path d="M2 2l6 6M8 2L2 8" stroke="#8a1f2c" strokeWidth="1.500" />
        </svg>
      </button>
      <div className="mx-0.5 flex-1 bg-[radial-gradient(#b0b0b0_1px,transparent_1px)] bg-[length:4px_5px]" />
    </div>
    <div className="relative flex min-w-0 flex-1 flex-col">
      <Panel className="h-7">
        <Tool icon="first" title="第一条" />
        <Tool icon="prev" title="上一条" />
        <Tool icon="next" title="下一条" />
        <Tool icon="last" title="最后一条" />
        <Sep />
        <Tool icon="up" title="上移" />
        <Tool icon="down" title="下移" />
        <Sep />
        <Tool icon="insertRow" label="插入" />
        <Tool icon="deleteRow" label="删除" />
        <Tool icon="scaleBar" label="缩尺配筋" />
        <Tool icon="rebarInfo" label="钢筋信息" />
        <Tool icon="rebarLib" label="钢筋图库" />
        <Tool icon="other" label="其他" menu="tight" />
        <Tool label="关闭" />
        <Sep />
        <span className="ml-1 whitespace-nowrap">单构件钢筋总重(kg)：4902.642</span>
      </Panel>
      <div className="flex min-h-0 flex-1 flex-col border border-[#a0a0a8] bg-white p-px pt-0">
        <div className="flex min-h-0 flex-1">
          <div className="min-w-0 flex-1 overflow-hidden">
            <RebarTable />
          </div>
          <div className="flex w-4 shrink-0 flex-col items-center bg-[#efefef] py-2">
            <Arrow className="rotate-180" />
            <span className="flex-1" />
            <div className="mb-2 flex h-14 w-[15px] flex-col items-center justify-center gap-0.5 border border-[#979797] bg-gradient-to-r from-[#f5f5f5] to-[#c4c4c8]">
              <i className="h-px w-[7px] bg-[#555]" />
              <i className="h-px w-[7px] bg-[#555]" />
              <i className="h-px w-[7px] bg-[#555]" />
            </div>
            <Arrow />
          </div>
        </div>
        <div className="flex h-4 shrink-0 items-center bg-[#efefef] pr-5">
          <Arrow className="mx-1.5 rotate-90" />
          <div className="flex h-[15px] w-[48%] items-center justify-center gap-0.5 border border-[#979797] bg-gradient-to-b from-[#f5f5f5] to-[#c4c4c8]">
            <i className="h-[7px] w-px bg-[#555]" />
            <i className="h-[7px] w-px bg-[#555]" />
            <i className="h-[7px] w-px bg-[#555]" />
          </div>
          <span className="flex-1" />
          <Arrow className="-rotate-90" />
        </div>
      </div>
      {/* highlight box and pointer drawn over the grid */}
      <div className="pointer-events-none absolute -left-0.5 top-[39px] h-[377px] w-[211px] border-[3px] border-[#800080]" />
      <svg className="pointer-events-none absolute left-[215px] top-[55px] h-[108px] w-[230px]" viewBox="0 0 230 108">
        <path d="M226 2L23 101l3 4.500L1 105l14-14 2.500 4z" fill="#fb3f3a" />
      </svg>
    </div>
  </section>
);

interface Prop {
  no: number;
  name: string;
  value?: string;
  blue?: boolean;
  group?: boolean;
}

const props: Prop[] = [
  { no: 1, name: "名称", value: "KL1" },
  { no: 2, name: "类别", value: "楼层框架梁", blue: true },
  { no: 3, name: "截面宽度(mm)", value: "400" },
  { no: 4, name: "截面高度(mm)", value: "1800" },
  { no: 5, name: "轴线距梁左边线距", value: "(200)" },
  { no: 6, name: "跨数量", value: "10" },
  { no: 7, name: "箍筋", value: "#10", blue: true },
  { no: 8, name: "肢数", value: "4", blue: true },
  { no: 9, name: "上部通长筋", value: "2#25", blue: true },
  { no: 10, name: "下部通长筋", value: "2#25", blue: true },
  { no: 11, name: "侧面构造或受扭筋", blue: true },
  { no: 12, name: "拉筋", blue: true },
  { no: 13, name: "其它箍筋", blue: true },
  { no: 14, name: "备注" },
  { no: 15, name: "其它属性", group: true },
  { no: 23, name: "锚固搭接", group: true },
  { no: 38, name: "显示样式", group: true },
];

const PropertyEditor = () => (
  <aside className="ml-[3px] flex w-[155px] shrink-0 flex-col pt-0.5 pb-0.5">
    <h2 className="h-4 border-t border-[#8f8f8f] text-[13px] leading-[14px]">属性编辑器</h2>
    <div className="min-h-0 flex-1 overflow-hidden border-2 border-r-0 border-b border-[#b0b0b8] bg-white">
      <table className="w-[220px] table-fixed border-separate border-spacing-0 whitespace-nowrap [&_td]:overflow-hidden [&_td]:border-b [&_td]:border-r [&_td]:border-[#c0c0c0] [&_td]:p-0 [&_th]:border-b [&_th]:border-r [&_th]:border-[#c0c0c0] [&_th]:p-0 [&_th]:font-normal">
        <colgroup>
          <col className="w-[21px]" />
          <col className="w-[121px]" />
          <col />
        </colgroup>
        <thead>
          <tr className="h-[23px]">
            <th className={headFill} />
            <th className={headFill}>属性名称</th>
            <th className={orangeFill} />
          </tr>
        </thead>
        <tbody>
          {props.map((p) => (
            <tr key={p.no} className="h-[19px]">
              <th className={p.no === 1 ? "bg-[#ffd38c] text-[#5c0050]" : rowHead}>
                <Grid12 text={String(p.no)} />
              </th>
              <td
                className={clsx(
                  p.no === 1 && "bg-[#3399ff] text-white",
                  p.blue && "text-[#0000ff]",
                  p.group && "text-[#858585]"
                )}
              >
                <div className={clsx("flex items-center pt-0.5", p.group ? "gap-1.5 pl-[3px]" : "pl-5")}>
                  {p.group && (
                    <button type="button" aria-label={`展开${p.name}`}>
                      <svg className="block h-[11px] w-[11px]" viewBox="0 0 11 11">
                        <path d="M.500.500h10v10H.500z" fill="#f4f4f4" stroke="#b0b0b0" />
                        <path d="M2.500 5.500h6M5.500 2.500v6" stroke="#000" />
                      </svg>
                    </button>
                  )}
                  <Grid12 text={p.name} />
                </div>
              </td>
              <td className={clsx("!pl-0.5", p.no === 1 && "bg-[#e5f1ff]")}>
                {(p.value ?? "").split(/(#)/).map((s, i) =>
                  s === "#" ? <RebarMark key={i} /> : <Grid12 key={i} text={s} />
                )}
              </td>
            </tr>
          ))}
        </tbody>
      </table>
    </div>
  </aside>
);

const StatusBar = () => (
  <footer className="-mb-3 flex h-5 shrink-0 gap-1 whitespace-nowrap border-t border-[#dcdcdc] bg-[#f4f4f4] leading-5 [&>span]:border [&>span]:border-[#d0d0d0] [&>span]:px-0.5">
    <span className="w-[56px]">X=0</span>
    <span className="w-[76px]">层高:5m</span>
    <span className="w-[97px]">底标高:-0.07m</span>
    <span className="w-[47px]">1(1)</span>
    <span className="flex-1">按鼠标左键选择一个图元，按右键中止或ESC取消</span>
  </footer>
);

const App: React.FC = () => {
  return (
    <div className="flex h-screen flex-col overflow-hidden bg-[#f0f0f0] font-['Noto_Sans','Noto_Sans_CJK_SC',sans-serif] text-xs text-black">
      <div className="h-[3px] shrink-0 border-b border-[#1d3f7c] bg-[#5c8ad0]" />
      <MenuBar />
      <MainToolbar />
      <div className="flex min-h-0 flex-1">
        <LeftPanel />
        <main className="ml-[5px] flex min-w-0 flex-1 flex-col overflow-hidden">
          <DrawToolbars />
          <DrawingCanvas />
          <SnapBar />
          <div className="h-0.5 shrink-0" />
          <RebarEditor />
        </main>
        <PropertyEditor />
      </div>
      <StatusBar />
    </div>
  );
};

export default App;
